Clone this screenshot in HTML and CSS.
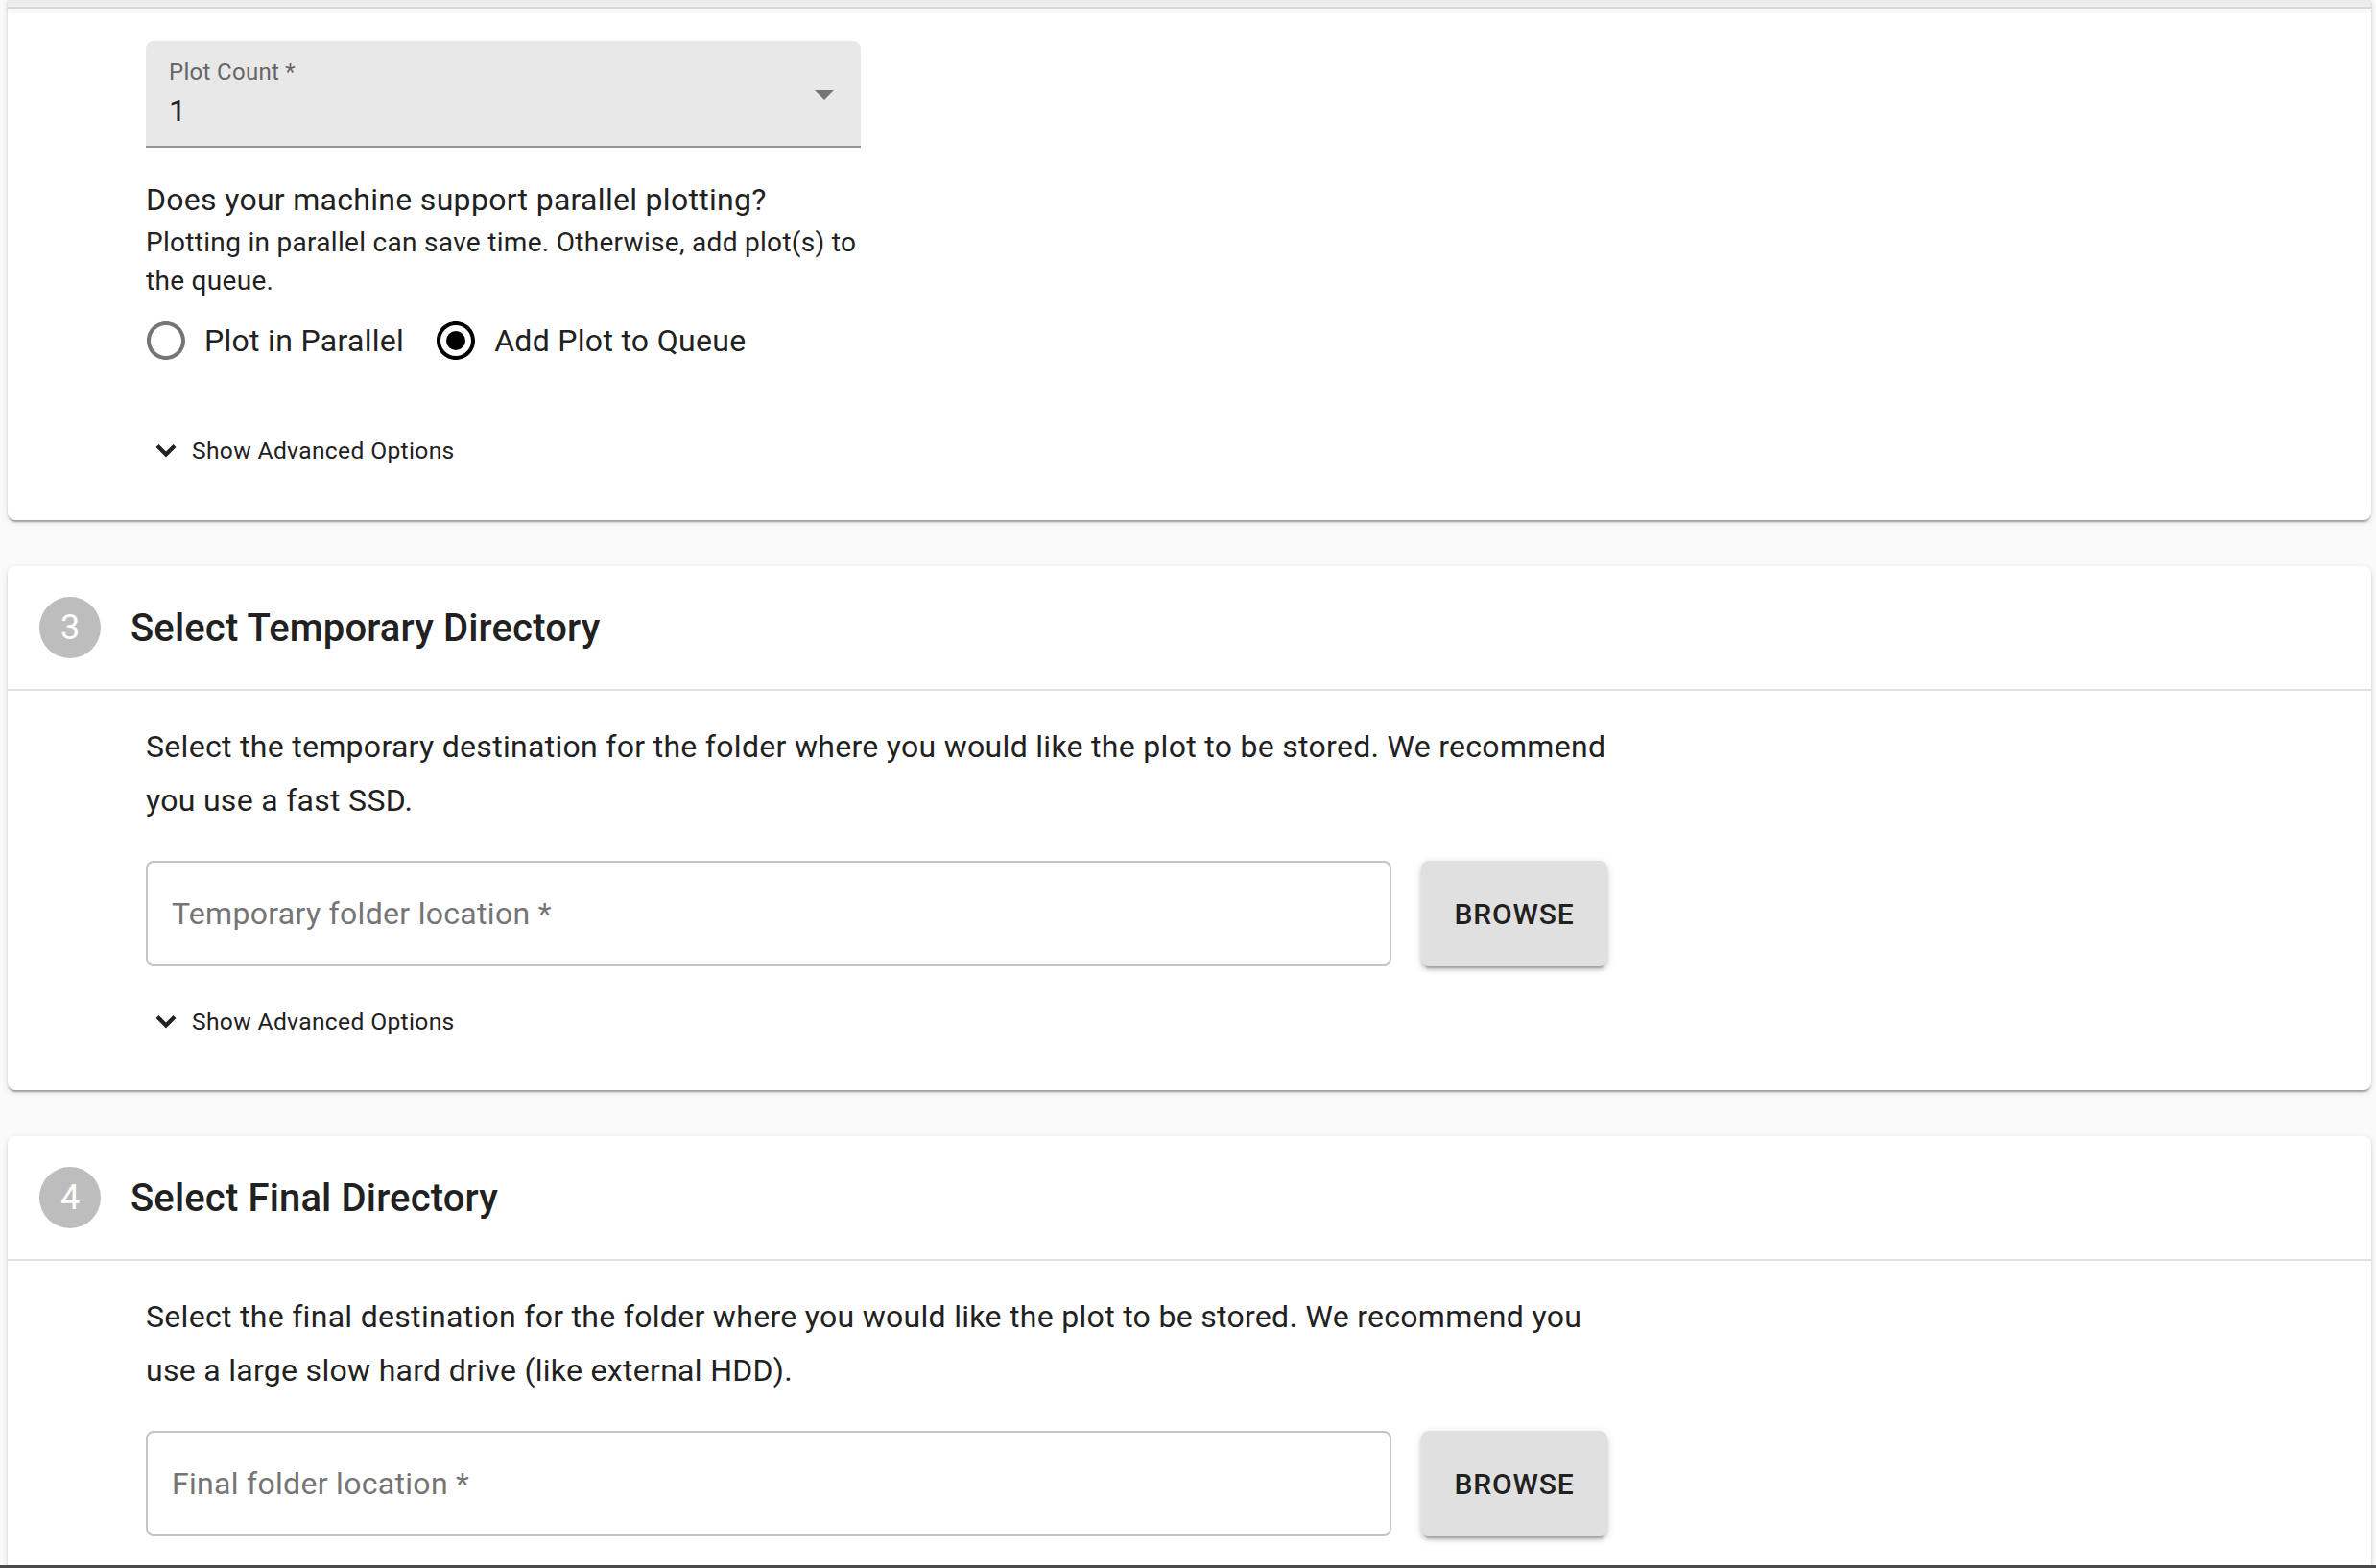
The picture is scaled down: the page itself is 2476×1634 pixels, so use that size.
FILE: index.html
```html
<!DOCTYPE html>
<html lang="en">
<head>
<meta charset="utf-8">
<title>Create Plot</title>
<link rel="stylesheet" href="styles.css">
</head>
<body>
<main class="page">
  <section class="card card-first">
    <div class="top-strip"></div>
    <div class="card-body body-first">
      <div class="column">
        <div class="select-filled">
          <div class="select-text">
            <span class="select-label">Plot Count *</span>
            <span class="select-value">1</span>
          </div>
          <svg class="select-arrow" viewBox="0 0 24 24"><path d="M7 10l5 5 5-5z"/></svg>
        </div>
        <p class="question">Does your machine support parallel plotting?</p>
        <p class="help">Plotting in parallel can save time. Otherwise, add plot(s) to the queue.</p>
        <div class="radio-group">
          <label class="radio-option">
            <svg class="radio-icon radio-off" viewBox="0 0 24 24"><path d="M12 2C6.48 2 2 6.48 2 12s4.48 10 10 10 10-4.48 10-10S17.52 2 12 2zm0 18c-4.42 0-8-3.58-8-8s3.58-8 8-8 8 3.58 8 8-3.58 8-8 8z"/></svg>
            <span class="radio-label">Plot in Parallel</span>
          </label>
          <label class="radio-option">
            <svg class="radio-icon radio-on" viewBox="0 0 24 24"><path d="M12 2C6.48 2 2 6.48 2 12s4.48 10 10 10 10-4.48 10-10S17.52 2 12 2zm0 18c-4.42 0-8-3.58-8-8s3.58-8 8-8 8 3.58 8 8-3.58 8-8 8z"/><circle cx="12" cy="12" r="5"/></svg>
            <span class="radio-label">Add Plot to Queue</span>
          </label>
        </div>
      </div>
      <div class="advanced advanced-first">
        <svg class="chevron" viewBox="0 0 24 24"><polyline points="6,9 12,15 18,9"/></svg>
        <span>Show Advanced Options</span>
      </div>
    </div>
  </section>

  <section class="card">
    <header class="card-header">
      <div class="step-circle">3</div>
      <h2 class="step-title">Select Temporary Directory</h2>
    </header>
    <div class="card-body body-dir">
      <p class="desc">Select the temporary destination for the folder where you would like the plot to be stored. We recommend you use a fast SSD.</p>
      <div class="folder-row">
        <div class="folder-input"><span class="placeholder">Temporary folder location *</span></div>
        <button class="browse">BROWSE</button>
      </div>
      <div class="advanced advanced-dir">
        <svg class="chevron" viewBox="0 0 24 24"><polyline points="6,9 12,15 18,9"/></svg>
        <span>Show Advanced Options</span>
      </div>
    </div>
  </section>

  <section class="card card-last">
    <header class="card-header">
      <div class="step-circle">4</div>
      <h2 class="step-title">Select Final Directory</h2>
    </header>
    <div class="card-body body-dir body-last">
      <p class="desc">Select the final destination for the folder where you would like the plot to be stored. We recommend you use a large slow hard drive (like external HDD).</p>
      <div class="folder-row">
        <div class="folder-input"><span class="placeholder">Final folder location *</span></div>
        <button class="browse">BROWSE</button>
      </div>
    </div>
  </section>
</main>
<div class="bottom-edge"></div>
</body>
</html>
```

FILE: styles.css
```css
html, body {
  margin: 0;
  padding: 0;
  background: #fafafa;
  font-family: Roboto, "Liberation Sans", Arial, sans-serif;
  color: #212121;
  overflow: hidden;
}

.page {
  display: flex;
  flex-direction: column;
  gap: 48px;
  padding: 0 5px 0 8px;
}

.card {
  background: #ffffff;
  border-radius: 8px;
  box-shadow: 0 4px 2px -2px rgba(0,0,0,0.2), 0 2px 2px 0 rgba(0,0,0,0.14), 0 2px 6px 0 rgba(0,0,0,0.12);
}

.card-first {
  border-radius: 0 0 8px 8px;
}

.top-strip {
  height: 7px;
  background: linear-gradient(#e9e9e9, #f0f0f0);
  border-bottom: 2px solid #d6d6d6;
  box-shadow: 0 2px 6px rgba(0,0,0,0.05);
}

.card-body {
  padding-left: 144px;
}

.body-first {
  padding-top: 34px;
  padding-bottom: 37px;
}

.column {
  width: 745px;
}

.select-filled {
  height: 109px;
  background: #e8e8e8;
  border-radius: 8px 8px 0 0;
  border-bottom: 2px solid #949494;
  display: flex;
  align-items: center;
  justify-content: space-between;
  padding: 0 14px 0 24px;
}

.select-text {
  display: flex;
  flex-direction: column;
}

.select-label {
  font-size: 24px;
  line-height: 28px;
  letter-spacing: 0.3px;
  color: #666666;
}

.select-value {
  font-size: 32px;
  line-height: 40px;
  margin-top: 6px;
  color: #212121;
}

.select-arrow {
  width: 48px;
  height: 48px;
  fill: #757575;
}

.question {
  margin: 30px 0 0;
  font-size: 32px;
  line-height: 48px;
  letter-spacing: 0.3px;
}

.help {
  margin: 1px 0 0;
  font-size: 28px;
  line-height: 40px;
  letter-spacing: 0.3px;
}

.radio-group {
  display: flex;
  align-items: center;
  height: 84px;
}

.radio-option {
  display: flex;
  align-items: center;
  gap: 16px;
  margin-left: -3px;
  margin-right: 33px;
}

.radio-icon {
  width: 48px;
  height: 48px;
}

.radio-off {
  fill: #757575;
}

.radio-on {
  fill: #000000;
}

.radio-label {
  font-size: 32px;
  line-height: 48px;
  letter-spacing: 0.3px;
}

.advanced {
  display: flex;
  align-items: center;
  height: 72px;
  gap: 9px;
  font-size: 24.6px;
  letter-spacing: 0.35px;
  color: #212121;
}

.advanced-first {
  margin-top: 36px;
}

.chevron {
  width: 36px;
  height: 36px;
  margin-left: 3px;
  fill: none;
  stroke: #212121;
  stroke-width: 2.8;
}

.card-header {
  height: 128px;
  display: flex;
  align-items: center;
  gap: 31px;
  padding-left: 33px;
  border-bottom: 2px solid #e0e0e0;
}

.step-circle {
  width: 64px;
  height: 64px;
  border-radius: 50%;
  background: #bdbdbd;
  color: #ffffff;
  font-size: 36px;
  display: flex;
  align-items: center;
  justify-content: center;
}

.step-title {
  margin: 0;
  font-size: 40px;
  font-weight: 500;
  letter-spacing: 0.15px;
  color: #212121;
}

.body-dir {
  padding-top: 30px;
  padding-bottom: 36px;
}

.body-last {
  padding-bottom: 128px;
}

.desc {
  margin: 0;
  width: 1523px;
  font-size: 32px;
  line-height: 56px;
  letter-spacing: 0.3px;
}

.folder-row {
  display: flex;
  gap: 31px;
  width: 1523px;
  margin-top: 35px;
}

.folder-input {
  flex: 1;
  height: 106px;
  border: 2px solid #c4c4c4;
  border-radius: 8px;
  display: flex;
  align-items: center;
  padding-left: 25px;
}

.placeholder {
  font-size: 32px;
  letter-spacing: 0.3px;
  color: #757575;
}

.browse {
  width: 194px;
  height: 110px;
  border: none;
  border-radius: 8px;
  background: #e0e0e0;
  color: #212121;
  font-family: Roboto, "Liberation Sans", Arial, sans-serif;
  font-size: 30px;
  font-weight: 500;
  letter-spacing: 0.86px;
  box-shadow: 0 6px 2px -4px rgba(0,0,0,0.2), 0 4px 4px 0 rgba(0,0,0,0.14), 0 2px 10px 0 rgba(0,0,0,0.12);
}

.advanced-dir {
  margin-top: 21px;
}

.bottom-edge {
  position: fixed;
  left: 0;
  right: 0;
  bottom: 0;
  height: 3px;
  background: #4a4a4a;
}
```
